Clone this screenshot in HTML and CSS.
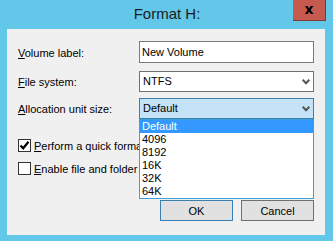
FILE: index.html
```html
<!DOCTYPE html>
<html>
<head>
<meta charset="utf-8">
<link rel="stylesheet" href="styles.css">
</head>
<body>
<div class="window">
  <div class="titlebar">
    <span class="title">Format H:</span>
    <button class="close" aria-label="Close">x</button>
  </div>
  <div class="client">
    <div class="row row-volume">
      <label class="label"><u>V</u>olume label:</label>
      <div class="textbox">New Volume</div>
    </div>
    <div class="row row-fs">
      <label class="label"><u>F</u>ile system:</label>
      <div class="combo"><span>NTFS</span><svg class="chev" width="8" height="6" viewBox="0 0 8 6"><path d="M0.7 0.8 L4 4.2 L7.3 0.8" fill="none" stroke="#555" stroke-width="2"/></svg></div>
    </div>
    <div class="row row-alloc">
      <label class="label"><u>A</u>llocation unit size:</label>
      <div class="combo combo-open"><span>Default</span><svg class="chev" width="8" height="6" viewBox="0 0 8 6"><path d="M0.7 0.8 L4 4.2 L7.3 0.8" fill="none" stroke="#555" stroke-width="2"/></svg>
        <ul class="list">
          <li class="sel">Default</li>
          <li>4096</li>
          <li>8192</li>
          <li>16K</li>
          <li>32K</li>
          <li>64K</li>
        </ul>
      </div>
    </div>
    <div class="check check-1">
      <span class="box"><svg width="11" height="11" viewBox="0 0 11 11"><path d="M1.5 5.5 L4.2 8.3 L9.5 1.8" fill="none" stroke="#000" stroke-width="2.2"/></svg></span>
      <span><u>P</u>erform a quick format</span>
    </div>
    <div class="check check-2">
      <span class="box"></span>
      <span><u>E</u>nable file and folder compression</span>
    </div>
    <div class="buttons">
      <button class="btn btn-default">OK</button>
      <button class="btn">Cancel</button>
    </div>
  </div>
</div>
</body>
</html>
```
FILE: styles.css
```css
* { box-sizing: border-box; }
html, body { margin: 0; padding: 0; }
body {
  width: 333px;
  height: 241px;
  background: #62c7e9;
  overflow: hidden;
  font-family: "Liberation Sans", Arial, sans-serif;
  font-size: 11px;
  color: #000;
}
.window { display: flex; flex-direction: column; height: 241px; }
.titlebar {
  position: relative;
  height: 29px;
  display: flex;
  justify-content: center;
  align-items: flex-start;
}
.title {
  font-size: 15px;
  color: #1c1c1c;
  margin-top: 5px;
  margin-left: 1px;
}
.close {
  position: absolute;
  top: 0;
  left: 293px;
  width: 33px;
  height: 21px;
  margin: 0;
  padding: 0 0 3px 0;
  border: none;
  border-right: 1px solid #7f3a33;
  border-bottom: 1px solid #7f3a33;
  background: #c75a4f;
  color: #000;
  font-family: "DejaVu Sans", sans-serif;
  font-weight: bold;
  font-size: 14px;
  line-height: 16px;
}
.client {
  margin: 0 8px 0 7px;
  height: 206px;
  background: #f0f0f0;
  padding: 12px 11px 0 11px;
  display: flex;
  flex-direction: column;
}
.row { display: flex; align-items: center; }
.label { width: 121px; padding-top: 1px; }
.row-fs { margin-top: 8px; }
.row-alloc { margin-top: 6px; }
.textbox {
  width: 175px;
  height: 22px;
  border: 1px solid #7a7a7a;
  background: #fff;
  padding: 0 2px;
  line-height: 20px;
}
.combo {
  position: relative;
  width: 175px;
  height: 21px;
  border: 1px solid #707070;
  background: #fff;
  padding: 0 3px;
  line-height: 19px;
  display: flex;
  justify-content: space-between;
  align-items: center;
}
.combo-open {
  background: #c5e3f7;
  border-color: #3c7fb1;
}
.chev { margin-right: 0px; margin-top: 1px; }
.list {
  position: absolute;
  left: -1px;
  top: 20px;
  width: 175px;
  margin: 0;
  padding: 0;
  list-style: none;
  background: #fff;
  border: 1px solid #3da0d8;
}
.list li {
  height: 13px;
  line-height: 13px;
  padding-left: 2px;
}
.list li.sel { background: #3399ff; color: #fff; }
.check {
  display: flex;
  align-items: center;
  gap: 3px;
}
.check-1 { margin-top: 20px; }
.check-2 { margin-top: 10px; }
.box {
  width: 13px;
  height: 13px;
  border: 1px solid #333;
  background: #fff;
  display: flex;
  align-items: center;
  justify-content: center;
}
.buttons {
  display: flex;
  justify-content: flex-end;
  gap: 8px;
  margin-top: 25px;
}
.btn {
  width: 73px;
  height: 21px;
  margin: 0;
  padding: 0;
  background: #e1e1e1;
  border: 1px solid #707070;
  font-family: "Liberation Sans", Arial, sans-serif;
  font-size: 11px;
  color: #000;
}
.btn-default { border-color: #3c7fb1; }
```
